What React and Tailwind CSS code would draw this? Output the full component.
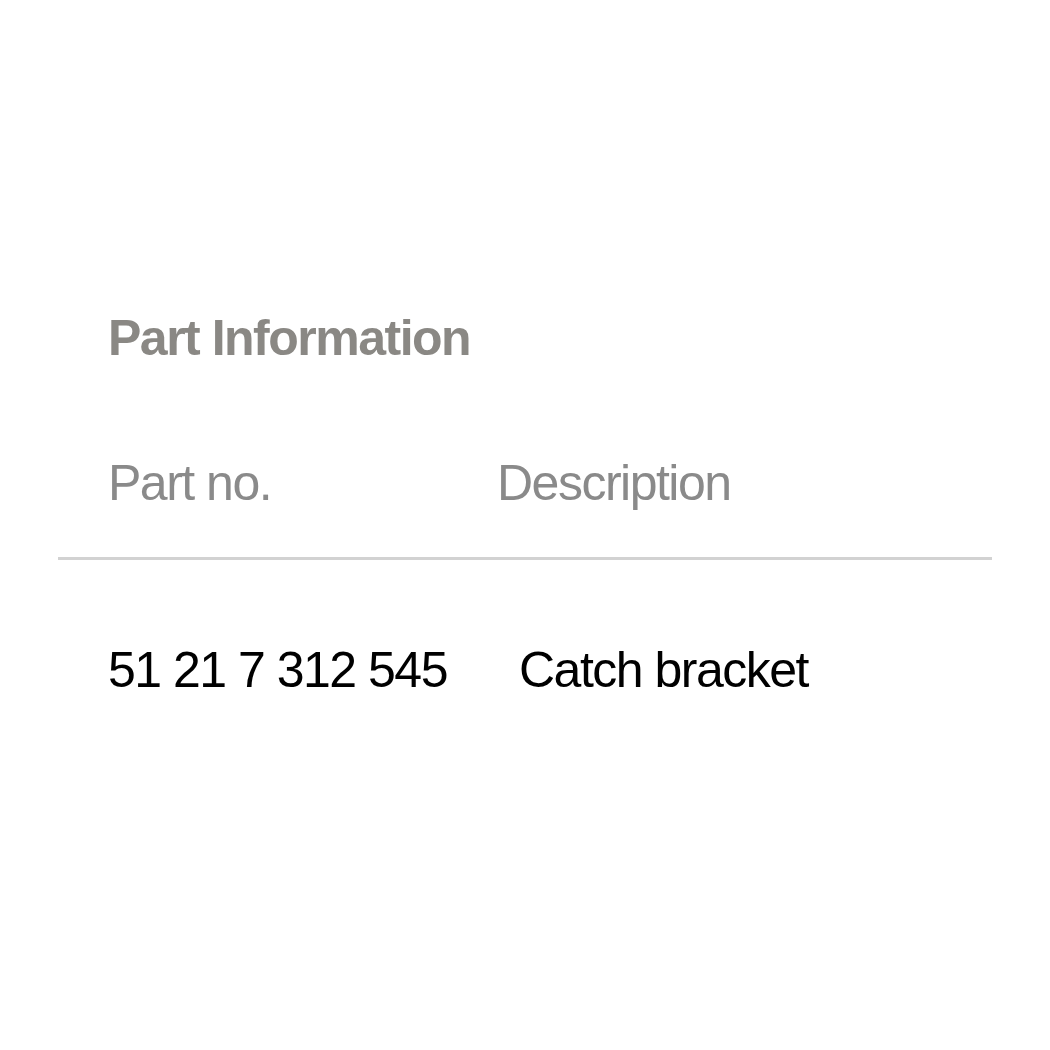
export default function App() {
  const font = { fontFamily: '"Liberation Sans", Arial, sans-serif' };
  return (
    <div className="min-h-[1050px] w-[1050px] bg-white" style={font}>
      <div className="pt-[313px]">
        <h2 className="pl-[108px] text-[50px] leading-[50px] font-bold tracking-[-1.5px] text-[#8a8884]">
          Part Information
        </h2>
        <div className="mt-[95px] flex pl-[108px] text-[50px] leading-[50px] tracking-[-1.5px] text-[#8a8a8a]">
          <div className="w-[389px]">Part no.</div>
          <div>Description</div>
        </div>
        <div className="ml-[58px] mt-[49px] h-[3px] w-[934px] bg-[#d2d2d2]" />
        <div className="mt-[85px] flex pl-[108px] text-[50px] leading-[50px] tracking-[-1.5px] text-black">
          <div className="w-[411px]">51 21 7 312 545</div>
          <div>Catch bracket</div>
        </div>
      </div>
    </div>
  );
}
